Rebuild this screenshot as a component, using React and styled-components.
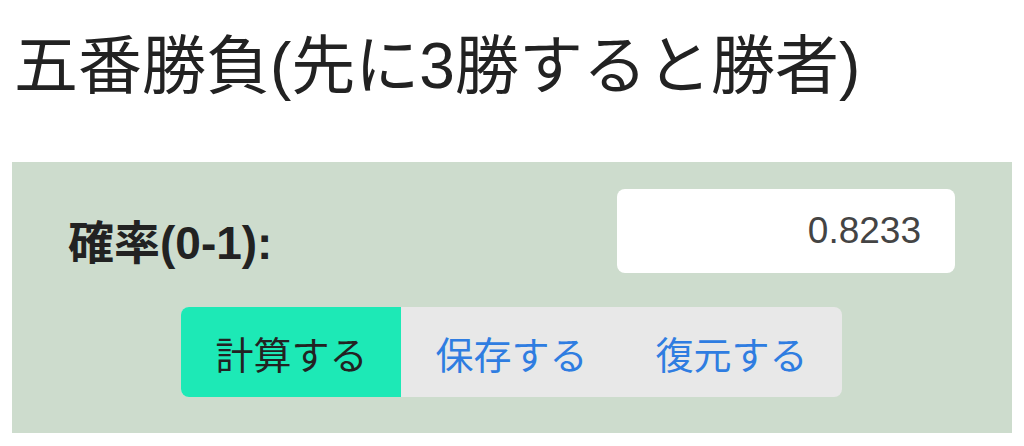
import styled, { createGlobalStyle } from 'styled-components';

const GlobalStyle = createGlobalStyle`
  body {
    margin: 0;
    background: #ffffff;
    font-family: "Liberation Sans", "Noto Sans CJK JP", sans-serif;
  }
`;

const Page = styled.div`
  padding: 0 12px;
`;

const Title = styled.h1`
  margin: 0;
  padding: 28px 0 0 2px;
  height: 162px;
  box-sizing: border-box;
  font-size: 64px;
  font-weight: normal;
  line-height: 1.2;
  color: #222222;
`;

const Panel = styled.div`
  width: 1000px;
  height: 271px;
  box-sizing: border-box;
  background-color: #cddccd;
  padding: 27px 57px 0 56px;
  display: flex;
  flex-direction: column;
  align-items: center;
  gap: 34px;
`;

const Row = styled.div`
  width: 100%;
  display: flex;
  justify-content: space-between;
  align-items: center;
`;

const Label = styled.label`
  padding-top: 16px;
  font-size: 46px;
  font-weight: bold;
  color: #222222;
`;

const NumberInput = styled.input`
  width: 338px;
  height: 84px;
  box-sizing: border-box;
  border: none;
  border-radius: 8px;
  background: #ffffff;
  padding: 0 34px;
  text-align: right;
  font-family: "Liberation Sans", sans-serif;
  font-size: 37px;
  color: #444444;
  outline: none;
`;

const ButtonGroup = styled.div`
  display: flex;
  border-radius: 8px;
  overflow: hidden;
  background: #e8e8e8;
`;

const GroupButton = styled.button`
  height: 90px;
  padding: 0 34px;
  border: none;
  background: ${(props) => (props.active ? '#1de9b6' : 'transparent')};
  color: ${(props) => (props.active ? '#222222' : '#2f7de1')};
  font-family: "Noto Sans CJK JP", sans-serif;
  font-size: 38px;
  font-weight: normal;
  cursor: pointer;
`;

const App = () => {
  return (
    <Page>
      <GlobalStyle />
      <Title>五番勝負(先に3勝すると勝者)</Title>
      <Panel>
        <Row>
          <Label htmlFor="prob">確率(0-1):</Label>
          <NumberInput id="prob" type="text" defaultValue="0.8233" />
        </Row>
        <ButtonGroup>
          <GroupButton active>計算する</GroupButton>
          <GroupButton>保存する</GroupButton>
          <GroupButton>復元する</GroupButton>
        </ButtonGroup>
      </Panel>
    </Page>
  );
};

export default App;
